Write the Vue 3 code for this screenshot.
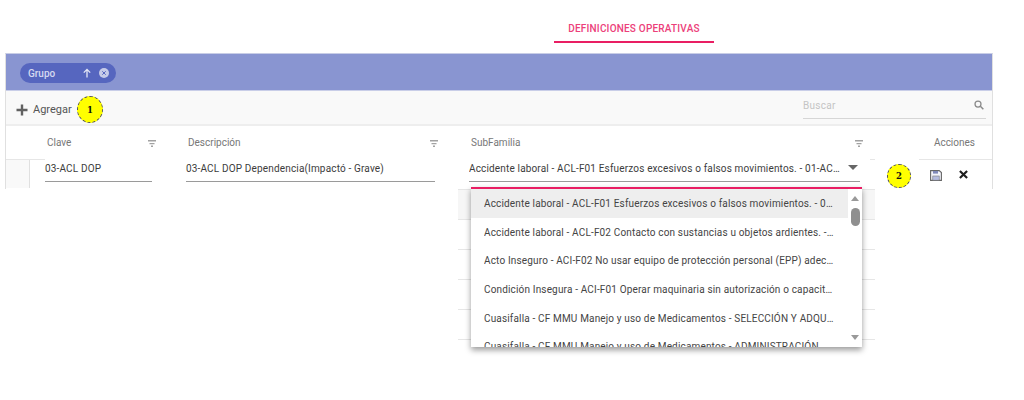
<script setup>
const options = [
  'Accidente laboral - ACL-F01 Esfuerzos excesivos o falsos movimientos. - 01-ACL Esfuerzo excesivo',
  'Accidente laboral - ACL-F02 Contacto con sustancias u objetos ardientes. - 02-ACL Contacto',
  'Acto Inseguro - ACI-F02 No usar equipo de protección personal (EPP) adecuado para la tarea',
  'Condición Insegura - ACI-F01 Operar maquinaria sin autorización o capacitación adecuada',
  'Cuasifalla - CF MMU Manejo y uso de Medicamentos - SELECCIÓN Y ADQUISICIÓN de medicamentos',
  'Cuasifalla - CF MMU Manejo y uso de Medicamentos - ADMINISTRACIÓN'
]
const backRows = [0, 1, 2, 3, 4, 5]
</script>

<template>
  <div class="page">
    <div class="tabs">
      <div class="tab">DEFINICIONES OPERATIVAS</div>
    </div>
    <div class="panel">
      <div class="group-bar">
        <div class="chip">
          <span class="chip-label">Grupo</span>
          <svg class="chip-arrow" width="10" height="10" viewBox="0 0 10 10"><path d="M5 9.5V1.6M1.8 4.6 5 1.4l3.2 3.2" fill="none" stroke="#e3e6f5" stroke-width="1.3"/></svg>
          <svg width="10" height="10" viewBox="0 0 11 11"><circle cx="5.5" cy="5.5" r="5.5" fill="#c6cbe8"/><path d="M3.6 3.6l3.8 3.8M7.4 3.6 3.6 7.4" stroke="#5666bf" stroke-width="1.1"/></svg>
        </div>
      </div>
      <div class="toolbar">
        <button class="add">
          <svg width="12" height="12" viewBox="0 0 12 12"><path d="M6 0.5v11M0.5 6h11" stroke="#616161" stroke-width="2.4" fill="none"/></svg>
          <span>Agregar</span>
        </button>
        <div class="badge badge-one">1</div>
        <div class="search">
          <span>Buscar</span>
          <svg width="10" height="10" viewBox="0 0 12 12"><circle cx="4.8" cy="4.8" r="3.6" fill="none" stroke="#8a8a8a" stroke-width="1.5"/><path d="M7.6 7.6 11.2 11.2" stroke="#8a8a8a" stroke-width="1.8"/></svg>
        </div>
      </div>
      <div class="grid head">
        <div class="cell-clave hcell"><span>Clave</span><svg class="filter filter-first" width="8" height="7" viewBox="0 0 8 7"><path d="M0 0h8v1.5H0zM1.5 3h5v1.2h-5zM3 5.5h2V7H3z" fill="#a2a2a2"/></svg></div>
        <div class="cell-desc hcell"><span>Descripción</span><svg class="filter" width="8" height="7" viewBox="0 0 8 7"><path d="M0 0h8v1.5H0zM1.5 3h5v1.2h-5zM3 5.5h2V7H3z" fill="#a2a2a2"/></svg></div>
        <div class="cell-sub hcell"><span>SubFamilia</span><svg class="filter" width="8" height="7" viewBox="0 0 8 7"><path d="M0 0h8v1.5H0zM1.5 3h5v1.2h-5zM3 5.5h2V7H3z" fill="#a2a2a2"/></svg></div>
        <div class="cell-act">Acciones</div>
      </div>
      <div class="grid row">
        <div class="stub"><i></i></div>
        <div class="cell-clave val"><div class="input">03-ACL DOP</div></div>
        <div class="cell-desc val"><div class="input">03-ACL DOP Dependencia(Impactó - Grave)</div></div>
        <div class="cell-sub val">
          <div class="input select"><span class="ellipsis">Accidente laboral - ACL-F01 Esfuerzos excesivos o falsos movimientos. - 01-ACL Esfuerzo</span><i class="caret"></i></div>
        </div>
        <div class="cell-icons">
          <svg width="12" height="11" viewBox="0 0 12 11"><path d="M1 .6h8.2L11.4 2.6v7.8H.6V.6z" fill="#f2f3fa" stroke="#666" stroke-width="1.1"/><rect x="3" y="1" width="5" height="2.6" fill="#7f88b8"/><rect x="2.8" y="6" width="6.4" height="4.2" fill="#b4bbdf" stroke="#777" stroke-width=".6"/></svg>
          <svg width="9" height="9" viewBox="0 0 10 10"><path d="M1 1l8 8M9 1 1 9" stroke="#1e1e1e" stroke-width="2.4"/></svg>
        </div>
      </div>
      <div class="badge badge-two">2</div>
    </div>

    <div class="behind">
      <div v-for="r in backRows" :key="r" class="behind-row" :class="{ shaded: r === 0 }"></div>
    </div>

    <div class="dropdown">
      <div class="dropdown-list">
        <div v-for="(o, i) in options" :key="o" class="option" :class="{ active: i === 0 }">
          <span class="ellipsis">{{ o }}</span>
        </div>
      </div>
      <div class="scrollbar">
        <i class="arrow up"></i>
        <i class="thumb"></i>
        <i class="arrow down"></i>
      </div>
    </div>
  </div>
</template>

<style scoped>
.page {
  position: relative;
  width: 1024px;
  height: 400px;
  overflow: hidden;
  background: #fff;
  font-family: Roboto, "Liberation Sans", sans-serif;
  color: #444;
}
.tabs {
  height: 53px;
  padding-left: 554px;
  box-sizing: border-box;
}
.tab {
  width: 160px;
  height: 43px;
  padding-top: 23px;
  box-sizing: border-box;
  border-bottom: 2px solid #e91e63;
  color: #ec407a;
  font-size: 10px;
  font-weight: 500;
  line-height: 12px;
  text-align: center;
  letter-spacing: 0.2px;
}
.panel {
  position: relative;
  margin-left: 5px;
  width: 988px;
  height: 136px;
  box-sizing: border-box;
  border-top: 1px solid #c8cde6;
  border-left: 1px solid #e0e0e0;
  border-right: 1px solid #e0e0e0;
  overflow: hidden;
}
.group-bar {
  height: 36px;
  background: #8995d1;
  display: flex;
  align-items: center;
  padding-left: 14px;
}
.chip {
  width: 96px;
  height: 20px;
  border-radius: 10px;
  background: #5666bf;
  display: flex;
  align-items: center;
  color: #d5d9f0;
  font-size: 10px;
  font-weight: 500;
  box-sizing: border-box;
  padding: 0 7px 0 8px;
  margin-top: 2px;
}
.chip-label { flex: 1; }
.chip-arrow { margin-right: 7px; }
.toolbar {
  position: relative;
  height: 36px;
  background: #f9f9f9;
  border-top: 1px solid #c9cee8;
  border-bottom: 2px solid #eeeeee;
  box-sizing: border-box;
  display: flex;
  align-items: center;
  padding: 0 6px 0 10px;
}
.add {
  display: flex;
  align-items: center;
  gap: 5px;
  border: 0;
  background: none;
  padding: 0;
  margin-top: 4px;
  font: inherit;
  font-size: 11px;
  color: #555;
}
.search {
  margin-left: auto;
  align-self: flex-start;
  width: 183px;
  height: 28px;
  box-sizing: border-box;
  border-bottom: 1px solid #d6d6d6;
  display: flex;
  align-items: center;
  justify-content: space-between;
  padding: 1px 2px 0 0;
  font-size: 10px;
  letter-spacing: 0.3px;
  color: #c4c4c4;
}
.badge {
  position: absolute;
  box-sizing: border-box;
  border-radius: 50%;
  background: #ffff00;
  border: 1px dashed #555;
  color: #111;
  font-family: "DejaVu Serif", serif;
  font-weight: 700;
  font-size: 8.5px;
  display: flex;
  align-items: center;
  justify-content: center;
}
.badge-one { left: 71px; top: 5px; width: 26px; height: 27px; }
.badge-two { left: 881px; top: 110px; width: 24px; height: 24px; }
.grid {
  display: grid;
  grid-template-columns: 39px 107px 34px 249px 34px 391px 1fr;
}
.head { height: 33px; font-size: 10px; color: #777; }
.hcell {
  display: flex;
  align-items: center;
  justify-content: space-between;
  padding-left: 2px;
}
.cell-clave { grid-column: 2; }
.cell-desc { grid-column: 4; }
.cell-sub { grid-column: 6; }
.cell-act {
  grid-column: 7;
  display: flex;
  align-items: center;
  justify-content: flex-end;
  padding-right: 17px;
}
.filter { margin-right: -3px; margin-top: 1px; }
.filter-first { margin-right: -4px; }
.row { height: 29px; font-size: 10px; color: #3c3c3c; }
.stub {
  grid-column: 1;
  grid-row: 1;
  border-top: 1px solid #e6e6e6;
}
.stub i {
  display: block;
  width: 23px;
  height: 100%;
  background: #f9f9f9;
  border-right: 1px solid #e0e0e0;
}
.val { padding-top: 1px; grid-row: 1; }
.input {
  height: 21px;
  line-height: 17px;
  border-bottom: 1px solid #9a9a9a;
  white-space: nowrap;
  letter-spacing: 0.16px;
}
.select { display: flex; justify-content: space-between; }
.ellipsis { display: block; overflow: hidden; white-space: nowrap; text-overflow: ellipsis; }
.select .ellipsis { width: 371px; }
.caret {
  width: 0;
  height: 0;
  margin: 5px 2px 0 0;
  border-left: 5px solid transparent;
  border-right: 5px solid transparent;
  border-top: 5px solid #666;
}
.cell-icons {
  grid-column: 7;
  grid-row: 1;
  display: flex;
  align-items: flex-start;
  gap: 17px;
  padding: 11px 0 0 70px;
  background: linear-gradient(to right, transparent 10px, #e6e6e6 10px 15px, transparent 15px 59px, #e6e6e6 59px) top / 100% 1px no-repeat;
}
.behind {
  position: absolute;
  left: 458px;
  top: 189px;
  width: 417px;
}
.behind-row {
  height: 29px;
  border-top: 1px solid #e6e6e6;
}
.behind-row:last-child { height: 0; }
.behind-row.shaded { background: #f6f6f6; }
.dropdown {
  position: absolute;
  left: 471px;
  top: 187px;
  width: 391px;
  height: 160px;
  background: #fff;
  border-top: 2px solid #e91e63;
  box-sizing: border-box;
  box-shadow: 0 3px 6px rgba(0,0,0,.4);
  display: flex;
  overflow: hidden;
}
.dropdown-list { flex: 1; min-width: 0; }
.option {
  height: 28.7px;
  padding: 1px 13px 0 13px;
  box-sizing: border-box;
  font-size: 10px;
  line-height: 27.7px;
  color: #444;
  letter-spacing: 0.16px;
}
.option.active { background: #eeeeee; }
.scrollbar {
  width: 14px;
  position: relative;
  display: flex;
  justify-content: center;
}
.arrow {
  position: absolute;
  width: 0;
  height: 0;
  border-left: 4.5px solid transparent;
  border-right: 4.5px solid transparent;
}
.arrow.up { top: 7px; border-bottom: 5px solid #999; }
.arrow.down { bottom: 7px; border-top: 5px solid #999; }
.thumb {
  position: absolute;
  top: 19px;
  width: 9px;
  height: 18px;
  border-radius: 5px;
  background: #8f8f8f;
}
</style>
